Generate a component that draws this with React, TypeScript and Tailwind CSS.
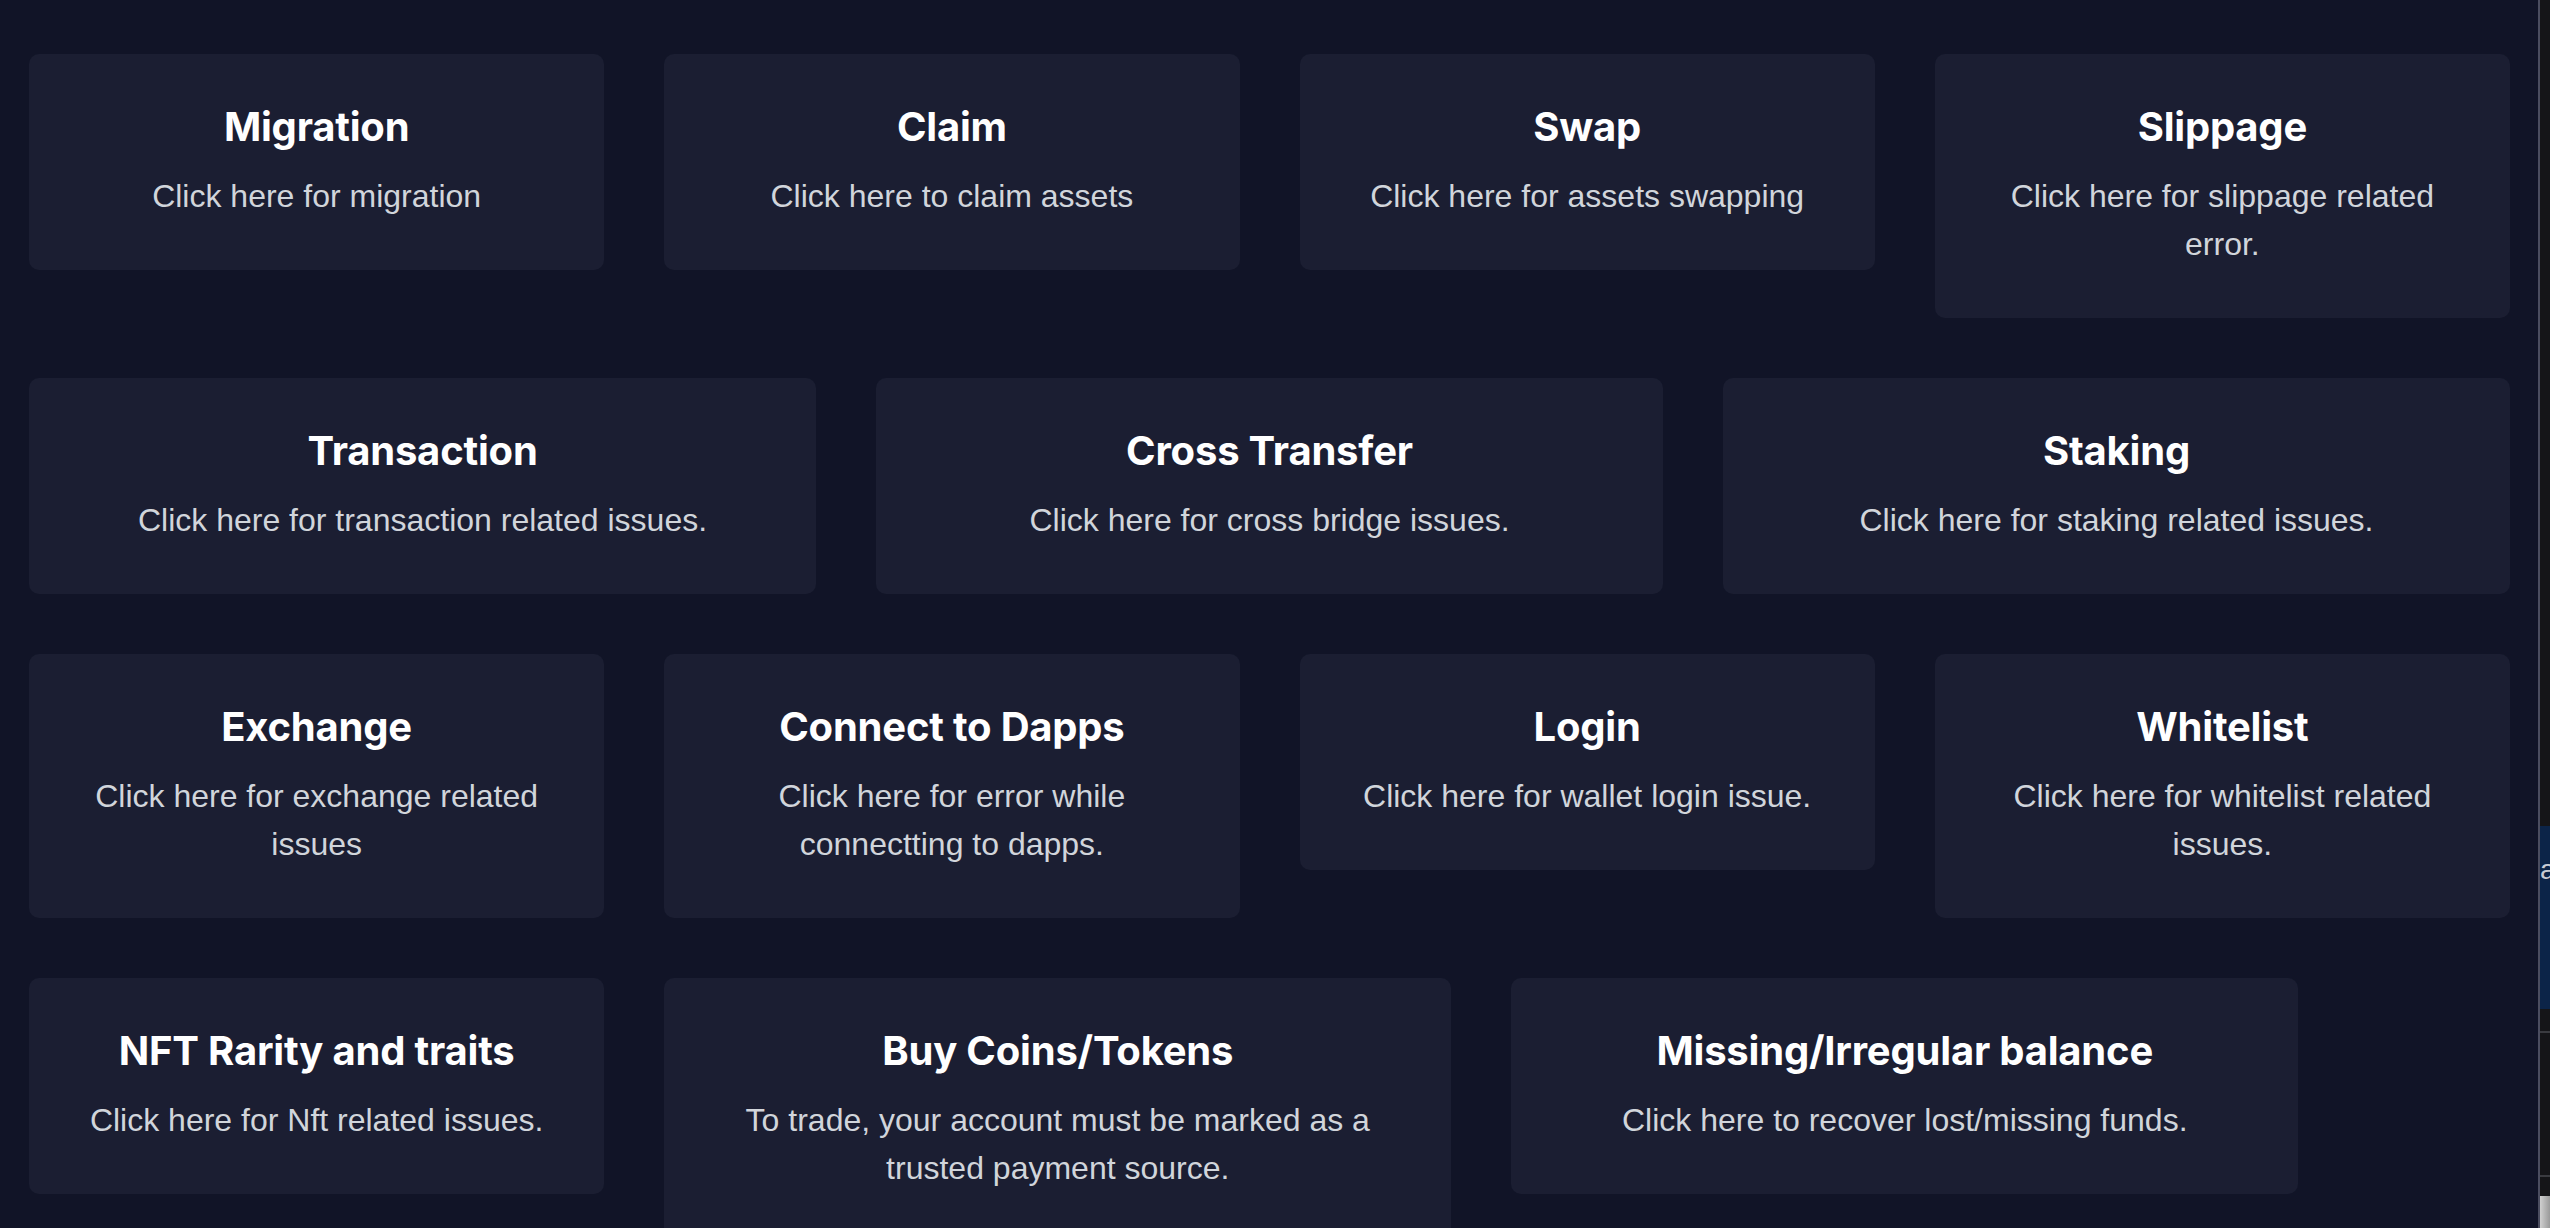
const cards = [
  { title: 'Migration', text: 'Click here for migration', span: 'col-span-3' },
  { title: 'Claim', text: 'Click here to claim assets', span: 'col-span-3' },
  { title: 'Swap', text: 'Click here for assets swapping', span: 'col-span-3' },
  { title: 'Slippage', text: 'Click here for slippage related error.', span: 'col-span-3' },
  { title: 'Transaction', text: 'Click here for transaction related issues.', span: 'col-span-4' },
  { title: 'Cross Transfer', text: 'Click here for cross bridge issues.', span: 'col-span-4' },
  { title: 'Staking', text: 'Click here for staking related issues.', span: 'col-span-4' },
  { title: 'Exchange', text: 'Click here for exchange related issues', span: 'col-span-3' },
  { title: 'Connect to Dapps', text: 'Click here for error while connectting to dapps.', span: 'col-span-3' },
  { title: 'Login', text: 'Click here for wallet login issue.', span: 'col-span-3' },
  { title: 'Whitelist', text: 'Click here for whitelist related issues.', span: 'col-span-3' },
  { title: 'NFT Rarity and traits', text: 'Click here for Nft related issues.', span: 'col-span-3' },
  { title: 'Buy Coins/Tokens', text: 'To trade, your account must be marked as a trusted payment source.', span: 'col-span-4' },
  { title: 'Missing/Irregular balance', text: 'Click here to recover lost/missing funds.', span: 'col-span-4' },
];

function Card({ title, text, span }: { title: string; text: string; span: string }) {
  return (
    <div className={`${span} rounded-[10px] bg-[#1b1e32] px-[48px] py-[50px] text-center cursor-pointer`}>
      <h3 className="text-[40px] leading-[46px] font-bold tracking-[-0.2px] text-white font-['Inter',sans-serif]">{title}</h3>
      <p className="mt-[22px] text-[32px] leading-[48px] text-[#d1d5db] font-['Liberation_Sans',Arial,sans-serif]">
        {text}
      </p>
    </div>
  );
}

export default function App() {
  return (
    <div className="flex h-[1228px] w-[2550px] overflow-hidden bg-[#111427]">
      {/* Main content */}
      <div className="flex-1 pt-[54px] pl-[29px] pr-[28px]">
        <div className="grid grid-cols-12 items-start gap-[60px]">
          {cards.map((c) => (
            <Card key={c.title} {...c} />
          ))}
        </div>
      </div>

      {/* Edge of neighbouring window */}
      <div className="w-[2px] bg-[#4b4d5f]" />
      <div className="flex w-[10px] flex-col bg-[#151518]">
        <div className="h-[826px]" />
        <div className="h-[183px] overflow-hidden bg-[#0c2448] pt-[30px] text-[28px] leading-none text-[#c8cbd4] font-['Liberation_Sans',Arial,sans-serif]">
          a
        </div>
        <div className="h-[22px]" />
        <div className="h-[2px] bg-[#3a3b40]" />
        <div className="h-[142px]" />
        <div className="h-[2px] bg-[#3a3b40]" />
        <div className="h-[19px]" />
        <div className="flex-1 bg-gradient-to-r from-[#d0d0d0] to-[#9a9a9a]" />
      </div>
    </div>
  );
}
